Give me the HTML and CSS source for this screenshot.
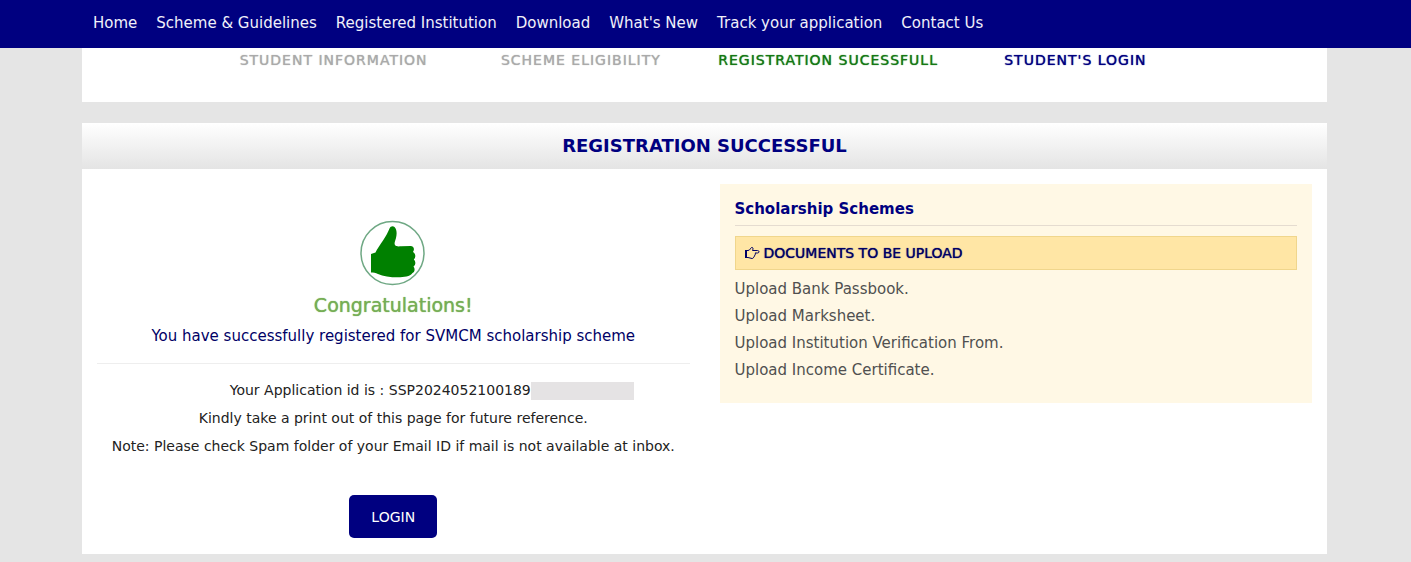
FILE: index.html
```html
<!DOCTYPE html>
<html lang="en">
<head>
<meta charset="utf-8">
<title>Registration Successful</title>
<meta name="viewport" content="width=device-width, initial-scale=1">
<link rel="stylesheet" href="styles.css">
</head>
<body>
<header class="topbar">
  <nav class="menu">
    <a href="#">Home</a>
    <a href="#">Scheme &amp; Guidelines</a>
    <a href="#">Registered Institution</a>
    <a href="#">Download</a>
    <a href="#">What's New</a>
    <a href="#">Track your application</a>
    <a href="#">Contact Us</a>
  </nav>
</header>
<main class="page">
  <ol class="steps">
    <li class="step">STUDENT INFORMATION</li>
    <li class="step">SCHEME ELIGIBILITY</li>
    <li class="step step-current">REGISTRATION SUCESSFULL</li>
    <li class="step step-next">STUDENT'S LOGIN</li>
  </ol>
  <section class="panel">
    <h1 class="panel-title">REGISTRATION SUCCESSFUL</h1>
    <div class="panel-body">
      <div class="result">
        <svg class="thumb" viewBox="0 0 66 66" width="66" height="66" aria-hidden="true">
          <circle cx="32.500" cy="33" r="31.500" fill="#fff" stroke="#6fa884" stroke-width="1.5"/>
          <path fill="#008000" d="M11 34L15.500 32.500C17 29 20 25 23 20.500C26 16 28 12 29.500 8.500C30.500 6 33 5.500 34.500 7C37 9.500 37 14 36 18C35 21.500 34 23.500 35 25C36 26.500 38 26.500 41 26.300L50.500 26C54 26.200 54.800 29.500 53 32C55.800 33.500 56 37.500 53.800 39.500C56 41.500 55.800 45 53.500 46.500C55.500 49 54.500 52 52.500 53C50 56.500 44 57.300 38 57.300C30 57.300 23 56.500 18 54C15.500 52.700 13.500 52.500 11 52.500Z"/>
        </svg>
        <h2 class="congrats">Congratulations!</h2>
        <p class="message">You have successfully registered for SVMCM scholarship scheme</p>
        <hr class="rule">
        <div class="details">
          <p>Your Application id is : SSP2024052100189<span class="masked"></span></p>
          <p>Kindly take a print out of this page for future reference.</p>
          <p>Note: Please check Spam folder of your Email ID if mail is not available at inbox.</p>
        </div>
        <button class="login" type="button">LOGIN</button>
      </div>
      <aside class="schemes">
        <h2 class="schemes-title">Scholarship Schemes</h2>
        <h3 class="schemes-head">
          <svg class="hand" viewBox="0 0 16 14" width="16" height="14" aria-hidden="true">
            <path fill="none" stroke="#000066" d="M4 4.500C6 4.500 6.500 2 7.500 1.500C9 1 9.500 2.500 8.500 4.500H13.500C15.500 4.500 15.500 7 13.500 7H11C12 8 11.500 9 10.500 9C11 10 10.500 11 9.500 11C9.500 12 9 12.500 8 12.500C6.500 12.500 5.500 11.500 4 11.500H1.500V4.500Z"/>
            <path fill="#000066" d="M1 4h2v8H1z"/>
          </svg>
          DOCUMENTS TO BE UPLOAD
        </h3>
        <ul class="documents">
          <li>Upload Bank Passbook.</li>
          <li>Upload Marksheet.</li>
          <li>Upload Institution Verification From.</li>
          <li>Upload Income Certificate.</li>
        </ul>
      </aside>
    </div>
  </section>
</main>
</body>
</html>
```
FILE: styles.css
```css
* { box-sizing: border-box; }
body {
  margin: 0;
  background: #e5e5e5;
  color: #222;
  font: 14px/20px Verdana, "DejaVu Sans", sans-serif;
}
h1, h2, h3, p, ol, ul { margin: 0; padding: 0; }
ol, ul { list-style: none; }

.topbar { background: #000080; padding: 0 93px; }
.menu { display: flex; gap: 19px; padding: 11px 0 13px; }
.menu a {
  color: #f0f0fa;
  font-size: 15px;
  line-height: 24px;
  text-decoration: none;
  white-space: nowrap;
}

.page { padding: 0 84px 8px 82px; }
.steps {
  display: grid;
  grid-template-columns: repeat(4, 1fr);
  padding: 2px 128px 32px;
  background: #fff;
}
.step {
  color: #aaa;
  font-size: 14px;
  line-height: 20px;
  letter-spacing: 1px;
  text-align: center;
  text-shadow: 0 0 1px currentColor;
  white-space: nowrap;
}
.step-current { color: #147814; }
.step-next { color: #000080; }

.panel { margin-top: 21px; background: #fff; }
.panel-title {
  padding: 12px 0;
  background: linear-gradient(#fff, #e4e4e4);
  color: #000080;
  font-size: 18px;
  line-height: 22px;
  text-align: center;
}
.panel-body {
  display: grid;
  grid-template-columns: 1fr 1fr;
  align-items: start;
  gap: 30px;
  padding: 15px 15px 16px;
}

.result { text-align: center; padding-top: 36px; }
.thumb { display: block; margin: 0 auto; }
.congrats {
  margin-top: 7px;
  color: #76ae55;
  font-size: 19px;
  font-weight: 400;
  line-height: 24px;
  text-shadow: 0 0 1px currentColor;
}
.message {
  margin-top: 9px;
  color: #000066;
  font-size: 15px;
}
.rule { margin: 17px 0 12px; border: 0; border-top: 1px solid #eee; }
.details p { font-size: 14px; line-height: 28px; }
.masked {
  display: inline-block;
  width: 103px;
  height: 18px;
  margin-right: -77px;
  background: #e5e3e4;
  vertical-align: middle;
}
.login {
  margin-top: 35px;
  padding: 12px 22px 11px;
  border: 0;
  border-radius: 5px;
  background: #000080;
  color: #fff;
  font: 14px/20px Verdana, "DejaVu Sans", sans-serif;
}

.schemes { padding: 15px 15px 19px; background: #fff8e5; }
.schemes-title {
  padding-bottom: 6px;
  border-bottom: 1px solid #e5dcd0;
  color: #000080;
  font-size: 15px;
  line-height: 20px;
}
.schemes-head {
  display: flex;
  align-items: center;
  gap: 4px;
  margin: 10px 0 6px;
  padding: 6px 8px;
  border: 1px solid #f0d68c;
  background: #ffe6a5;
  color: #000066;
  font-size: 14px;
  font-weight: 400;
  text-shadow: 0 0 1px currentColor;
}
.documents { color: #505050; font-size: 15px; line-height: 27px; }
```
